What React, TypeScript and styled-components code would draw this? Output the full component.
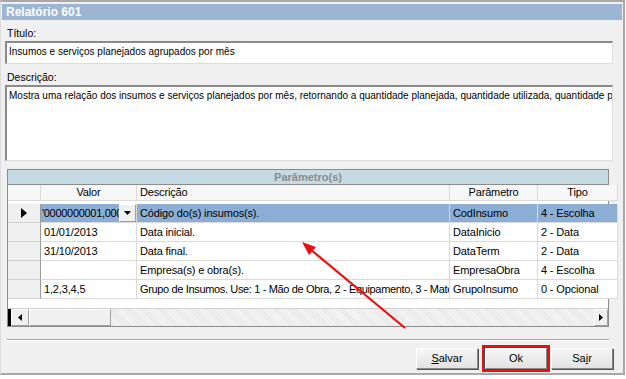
import React from 'react';
import styled, { createGlobalStyle } from 'styled-components';

const GlobalStyle = createGlobalStyle`
  html, body {
    margin: 0;
    padding: 0;
    background: #ffffff;
  }
  body {
    font-family: "Liberation Sans", Arial, sans-serif;
    font-size: 11px;
    color: #000;
  }
`;

const Page = styled.div`
  position: relative;
  width: 626px;
  height: 379px;
  overflow: hidden;
`;

const Window = styled.div`
  box-sizing: border-box;
  width: 625px;
  height: 375px;
  background: #f0f0f0;
  border-top: 2px solid #a8a8a8;
  border-right: 2px solid #a8a8a8;
  border-bottom: 2px solid #a8a8a8;
  border-left: 1px solid #dcdcdc;
  display: flex;
  flex-direction: column;
`;

const TitleBar = styled.div`
  height: 16px;
  margin: 2px 1px 0 1px;
  padding-left: 4px;
  background: #9bb5d3;
  color: #ffffff;
  font-weight: bold;
  font-size: 12px;
  line-height: 16px;
`;

const Body = styled.div`
  padding: 6px 10px 0 4px;
  display: flex;
  flex-direction: column;
`;

const Label = styled.div`
  padding-left: 2px;
  height: 15px;
  line-height: 15px;
  font-size: 10.5px;
  color: #000;
`;

const Field = styled.div<{ $h: number }>`
  box-sizing: border-box;
  height: ${({ $h }) => $h}px;
  background: #ffffff;
  border-top: 2px solid #8a8a8a;
  border-left: 2px solid #8a8a8a;
  border-right: 1px solid #dcdcdc;
  border-bottom: 1px solid #dcdcdc;
  padding: 3px 2px;
  font-size: 10px;
  white-space: nowrap;
  overflow: hidden;
  margin-bottom: 6px;
`;

const Grid = styled.div`
  box-sizing: border-box;
  margin: 2px 4px 0 2px;
  height: 158px;
  border: 1px solid #8c8c8c;
  background: #ffffff;
  display: flex;
  flex-direction: column;
`;

const GridCaption = styled.div`
  height: 14px;
  line-height: 14px;
  background: #c5dae2;
  color: #8c8c8c;
  font-weight: bold;
  text-align: center;
  border-bottom: 1px solid #8c8c8c;
`;

const Rows = styled.div`
  display: grid;
  grid-template-columns: 33px 96px 313px 88px 80px;
  grid-auto-rows: 19px;
  letter-spacing: -0.15px;
`;

const HeadCell = styled.div<{ $left?: boolean }>`
  box-sizing: border-box;
  height: 16px;
  line-height: 15px;
  background: #f7f7f7;
  border-right: 1px solid #dadada;
  border-bottom: 1px solid #dadada;
  text-align: ${({ $left }) => ($left ? 'left' : 'center')};
  padding-left: ${({ $left }) => ($left ? '3px' : '0')};
  white-space: nowrap;
  overflow: hidden;
`;

const Indicator = styled.div`
  box-sizing: border-box;
  background: #f0f0f0;
  border-right: 1px solid #9a9a9a;
  border-bottom: 1px solid #d0d0d0;
  display: flex;
  align-items: center;
  justify-content: center;
`;

const Cell = styled.div<{ $sel?: boolean; $tight?: boolean }>`
  box-sizing: border-box;
  background: ${({ $sel }) => ($sel ? '#8caed5' : '#ffffff')};
  border-right: 1px solid #dadada;
  border-bottom: 1px solid #dadada;
  padding-left: 3px;
  line-height: 18px;
  letter-spacing: ${({ $tight }) => ($tight ? '-0.35px' : 'inherit')};
  white-space: nowrap;
  overflow: hidden;
`;

const Combo = styled.div`
  box-sizing: border-box;
  background: #ffffff;
  border-right: 1px solid #dadada;
  border-bottom: 1px solid #dadada;
  display: flex;
  align-items: stretch;
`;

const ComboText = styled.div`
  flex: 1;
  min-width: 0;
  padding-left: 1px;
  line-height: 18px;
  letter-spacing: -0.3px;
  white-space: nowrap;
  overflow: hidden;
  background: #8caed5;
`;

const ComboButton = styled.div`
  box-sizing: border-box;
  width: 17px;
  background: #f0f0f0;
  border: 1px solid #a0a0a0;
  border-top-color: #ffffff;
  border-left-color: #ffffff;
  display: flex;
  align-items: center;
  justify-content: center;
`;

const Filler = styled.div`
  flex: 1;
  background: #ffffff;
`;

const ScrollBar = styled.div`
  height: 17px;
  display: flex;
  border-top: 1px solid #d0d0d0;
  background-color: #f2f2f2;
  background-image: repeating-linear-gradient(45deg, #e8e8e8 0 1px, #f6f6f6 1px 2px);
`;

const ScrollEdge = styled.div`
  width: 3px;
  background: #000;
`;

const ScrollBtn = styled.div<{ $w: number }>`
  box-sizing: border-box;
  width: ${({ $w }) => $w}px;
  background: #f0f0f0;
  border: 1px solid #a0a0a0;
  border-top-color: #ffffff;
  border-left-color: #ffffff;
  display: flex;
  align-items: center;
  justify-content: center;
`;

const Track = styled.div`
  flex: 1;
`;

const Separator = styled.div`
  margin: 12px 4px 0 2px;
  height: 0;
  border-top: 1px solid #a8a8a8;
  border-bottom: 1px solid #ffffff;
`;

const ButtonRow = styled.div`
  display: flex;
  justify-content: flex-end;
  align-items: center;
  padding: 7px 0 0 0;
`;

const Button = styled.div<{ $mark?: boolean }>`
  box-sizing: border-box;
  width: 62px;
  height: 21px;
  line-height: 19px;
  text-align: center;
  background: linear-gradient(#f6f6f6, #e3e3e3);
  border: 1px solid #8a8a8a;
  border-top-color: #ffffff;
  border-left-color: #ffffff;
  box-shadow: ${({ $mark }) =>
    $mark ? '0 0 0 1px #4a4a4a, 0 0 0 3px #e81010' : '1px 1px 0 #555'};
  margin-left: ${({ $mark }) => ($mark ? '7px' : '4px')};
  font-size: 11px;
`;

const Arrow = styled.svg`
  position: absolute;
  left: 0;
  top: 0;
  pointer-events: none;
`;

const rows = [
  { valor: '01/01/2013', desc: 'Data inicial.', param: 'DataInicio', tipo: '2 - Data' },
  { valor: '31/10/2013', desc: 'Data final.', param: 'DataTerm', tipo: '2 - Data' },
  { valor: '', desc: 'Empresa(s) e obra(s).', param: 'EmpresaObra', tipo: '4 - Escolha' },
  {
    valor: '1,2,3,4,5',
    desc: 'Grupo de Insumos. Use: 1 - Mão de Obra, 2 - Equipamento, 3 - Mate',
    param: 'GrupoInsumo',
    tipo: '0 - Opcional',
    tight: true,
  },
];

const Tri = ({ dir, big }: { dir: 'left' | 'right' | 'down'; big?: boolean }) => {
  if (dir === 'down') {
    return (
      <svg width="7" height="4" viewBox="0 0 7 4">
        <path d="M0 0h7L3.5 4z" fill="#000" />
      </svg>
    );
  }
  const w = big ? 6 : 4;
  const h = big ? 10 : 7;
  return (
    <svg width={w} height={h} viewBox={`0 0 ${w} ${h}`}>
      <path
        d={dir === 'right' ? `M0 0v${h}l${w}-${h / 2}z` : `M${w} 0v${h}L0 ${h / 2}z`}
        fill="#000"
      />
    </svg>
  );
};

export default function App() {
  return (
    <Page>
      <GlobalStyle />
      <Window>
        <TitleBar>Relatório 601</TitleBar>
        <Body>
          <Label>Título:</Label>
          <Field $h={23}>Insumos e serviços planejados agrupados por mês</Field>
          <Label>Descrição:</Label>
          <Field $h={76}>
            Mostra uma relação dos insumos e serviços planejados por mês, retornando a quantidade planejada, quantidade utilizada, quantidade p
          </Field>
          <Grid>
            <GridCaption>Parâmetro(s)</GridCaption>
            <Rows>
              <HeadCell />
              <HeadCell>Valor</HeadCell>
              <HeadCell $left>Descrição</HeadCell>
              <HeadCell>Parâmetro</HeadCell>
              <HeadCell>Tipo</HeadCell>

              <Indicator>
                <Tri dir="right" big />
              </Indicator>
              <Combo>
                <ComboText>'0000000001,000</ComboText>
                <ComboButton>
                  <Tri dir="down" />
                </ComboButton>
              </Combo>
              <Cell $sel>Código do(s) insumos(s).</Cell>
              <Cell $sel>CodInsumo</Cell>
              <Cell $sel>4 - Escolha</Cell>

              {rows.map((r) => (
                <React.Fragment key={r.param}>
                  <Indicator />
                  <Cell>{r.valor}</Cell>
                  <Cell $tight={r.tight}>{r.desc}</Cell>
                  <Cell>{r.param}</Cell>
                  <Cell>{r.tipo}</Cell>
                </React.Fragment>
              ))}
            </Rows>
            <Filler />
            <ScrollBar>
              <ScrollEdge />
              <ScrollBtn $w={18}>
                <Tri dir="left" />
              </ScrollBtn>
              <ScrollBtn $w={82} />
              <Track />
              <ScrollBtn $w={14}>
                <Tri dir="right" />
              </ScrollBtn>
            </ScrollBar>
          </Grid>
          <Separator />
          <ButtonRow>
            <Button>
              <u>S</u>alvar
            </Button>
            <Button $mark>Ok</Button>
            <Button>
              Sa<u>i</u>r
            </Button>
          </ButtonRow>
        </Body>
      </Window>
      <Arrow width="626" height="379" viewBox="0 0 626 379">
        <line x1="405" y1="328" x2="310" y2="249" stroke="#e81010" strokeWidth="2.2" />
        <path d="M302 242 L316 247 L309 255 Z" fill="#e81010" />
      </Arrow>
    </Page>
  );
}
